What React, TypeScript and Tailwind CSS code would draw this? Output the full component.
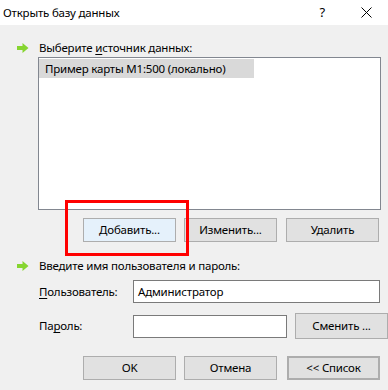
import React from "react";

const GreenArrow: React.FC = () => (
  <svg width="12" height="10" viewBox="0 0 12 10" className="shrink-0">
    <polygon points="0,3 5.5,3 5.5,0 11.5,5 5.5,10 5.5,7 0,7" fill="#86d530" />
  </svg>
);

const Btn: React.FC<{ children: React.ReactNode; className?: string }> = ({
  children,
  className = "",
}) => (
  <div
    className={`flex h-[24px] w-[93px] items-center justify-center border border-[#adadad] bg-[#e1e1e1] text-black ${className}`}
  >
    {children}
  </div>
);

export default function App() {
  return (
    <div
      className="relative h-[390px] w-[388px] overflow-hidden bg-[#f0f0f0] text-[11.5px] tracking-[-0.2px] text-black"
      style={{ fontFamily: '"Noto Sans", "Liberation Sans", sans-serif' }}
    >
      {/* заголовок */}
      <div className="flex h-[25px] items-center bg-white">
        <span className="pl-[3px]">Открыть базу данных</span>
        <span className="ml-auto mr-[36px] text-[13px]">?</span>
        <svg width="11" height="11" viewBox="0 0 11 11" className="mr-[16px]">
          <path d="M0.5 0.5 L10.5 10.5 M10.5 0.5 L0.5 10.5" stroke="#000" strokeWidth="1" />
        </svg>
      </div>

      {/* источник данных */}
      <div className="mt-[15px] flex h-[16px] items-center">
        <div className="ml-[17px] w-[22px]">
          <GreenArrow />
        </div>
        <span>
          Выберите <span className="underline underline-offset-2">и</span>сточник данных:
        </span>
      </div>

      <div className="ml-[38px] mt-[1px] h-[153px] w-[343px] border border-[#828790] bg-white pt-[1px]">
        <div className="flex h-[19px] w-[215px] items-center bg-[#d9d9d9] pl-[6px]">
          Пример карты М1:500 (локально)
        </div>
      </div>

      <div className="mt-[8px] flex gap-[8px] pl-[83px]">
        <Btn className="border-[#0078d7] bg-[#e5f1fb]">Добавить...</Btn>
        <Btn>Изменить...</Btn>
        <Btn className="ml-[1px]">Удалить</Btn>
      </div>

      {/* пользователь */}
      <div className="mt-[16px] flex h-[16px] items-center">
        <div className="ml-[17px] w-[22px]">
          <GreenArrow />
        </div>
        <span>Введите имя пользователя и пароль:</span>
      </div>

      <div className="mt-[6px] flex items-center">
        <span className="ml-[39px] w-[94px]">
          <span className="underline underline-offset-2">П</span>ользователь:
        </span>
        <div className="flex h-[23px] w-[247px] items-center border border-[#7a7a7a] bg-white pl-[4px]">
          Администратор
        </div>
      </div>

      <div className="mt-[10px] flex items-center">
        <span className="ml-[39px] w-[94px]">
          Па<span className="underline underline-offset-2">р</span>оль:
        </span>
        <div className="h-[23px] w-[154px] border border-[#7a7a7a] bg-white" />
        <Btn className="ml-[8px] h-[26px] w-[84px]">Сменить ...</Btn>
      </div>

      <div className="mt-[17px] flex gap-[8px] pl-[83px]">
        <Btn>OK</Btn>
        <Btn>Отмена</Btn>
        <Btn className="ml-[2px] w-[92px] border-2 border-[#0078d7]">&lt;&lt; Список</Btn>
      </div>

      {/* выделение */}
      <div className="absolute left-[65px] top-[200px] h-[56px] w-[124px] border-[3px] border-[#ff0000]" />
    </div>
  );
}
